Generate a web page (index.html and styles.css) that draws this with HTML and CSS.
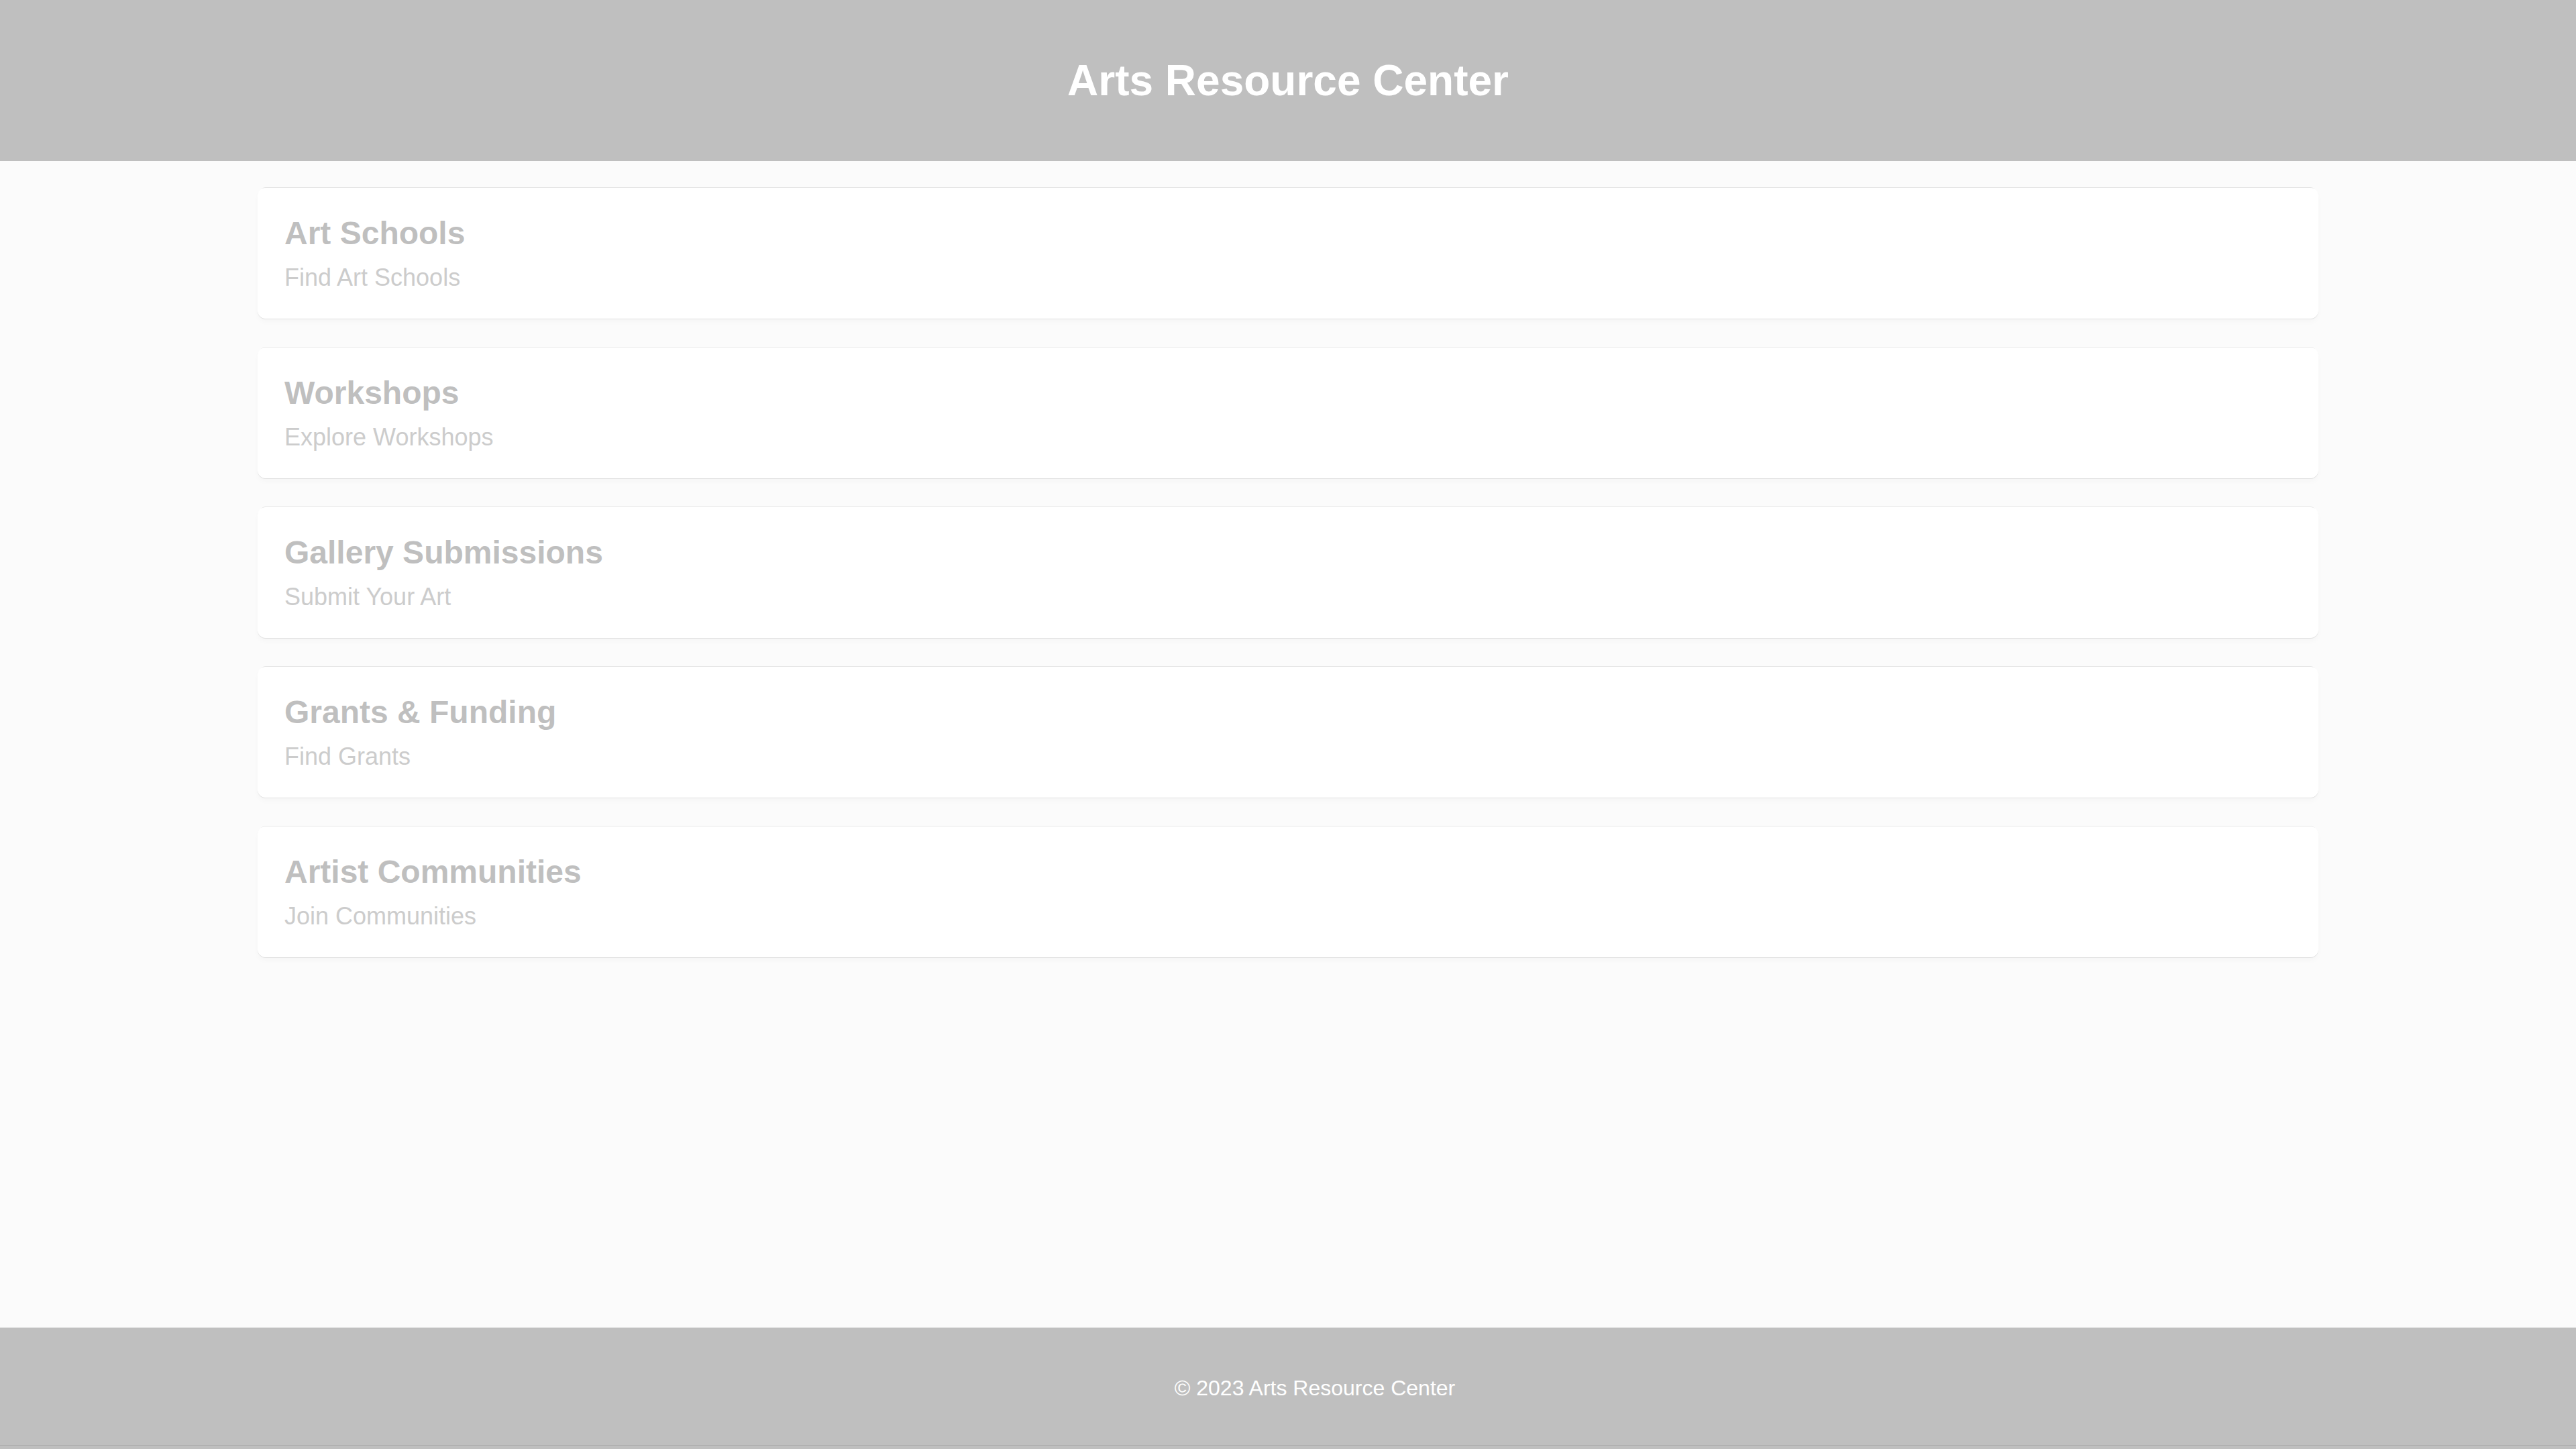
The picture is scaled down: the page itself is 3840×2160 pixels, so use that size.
FILE: index.html
```html
<!DOCTYPE html>
<html lang="en">
<head>
<meta charset="utf-8">
<title>Arts Resource Center</title>
<link rel="stylesheet" href="styles.css">
</head>
<body>
<header class="site-header">
  <h1 class="site-title">Arts Resource Center</h1>
</header>
<main class="resources">
  <section class="card">
    <h2 class="card-title">Art Schools</h2>
    <p class="card-link">Find Art Schools</p>
  </section>
  <section class="card">
    <h2 class="card-title">Workshops</h2>
    <p class="card-link">Explore Workshops</p>
  </section>
  <section class="card">
    <h2 class="card-title">Gallery Submissions</h2>
    <p class="card-link">Submit Your Art</p>
  </section>
  <section class="card">
    <h2 class="card-title">Grants &amp; Funding</h2>
    <p class="card-link">Find Grants</p>
  </section>
  <section class="card">
    <h2 class="card-title">Artist Communities</h2>
    <p class="card-link">Join Communities</p>
  </section>
</main>
<footer class="site-footer">
  <p class="copyright">© 2023 Arts Resource Center</p>
</footer>
</body>
</html>
```

FILE: styles.css
```css
html, body {
  margin: 0;
  padding: 0;
}

body {
  font-family: "Liberation Sans", Arial, sans-serif;
  background: #fbfbfb;
  min-height: 100vh;
  display: flex;
  flex-direction: column;
}

.site-header {
  background: #bfbfbf;
  height: 240px;
  box-sizing: border-box;
  display: flex;
  align-items: center;
  justify-content: center;
}

.site-title {
  margin: 0;
  color: #ffffff;
  font-size: 64px;
  font-weight: bold;
  line-height: normal;
}

.resources {
  flex: 1;
  padding: 40px 0 0;
  display: flex;
  flex-direction: column;
  align-items: center;
}

.card {
  width: 80%;
  box-sizing: border-box;
  background: #ffffff;
  border-radius: 12px;
  padding: 40px;
  margin-bottom: 43px;
  box-shadow: 0 -5px 0 -4px #e6e6e6, 0 1px 0 #e0e0e0, 0 5px 8px rgba(0, 0, 0, 0.025);
}

.card-title {
  margin: 0 0 18px;
  font-size: 48px;
  font-weight: bold;
  color: #bfbfbf;
  line-height: normal;
}

.card-link {
  margin: 0;
  font-size: 36px;
  color: #cccccc;
  line-height: normal;
}

.site-footer {
  background: #bfbfbf;
  height: 181px;
  box-sizing: border-box;
  padding: 0 0 0 80px;
  display: flex;
  align-items: center;
  justify-content: center;
  box-shadow: inset 0 -5px 0 #bfbfbf, inset 0 -6px 0 #ababab;
}

.copyright {
  margin: 0;
  color: #ffffff;
  font-size: 32px;
  line-height: normal;
}
```
